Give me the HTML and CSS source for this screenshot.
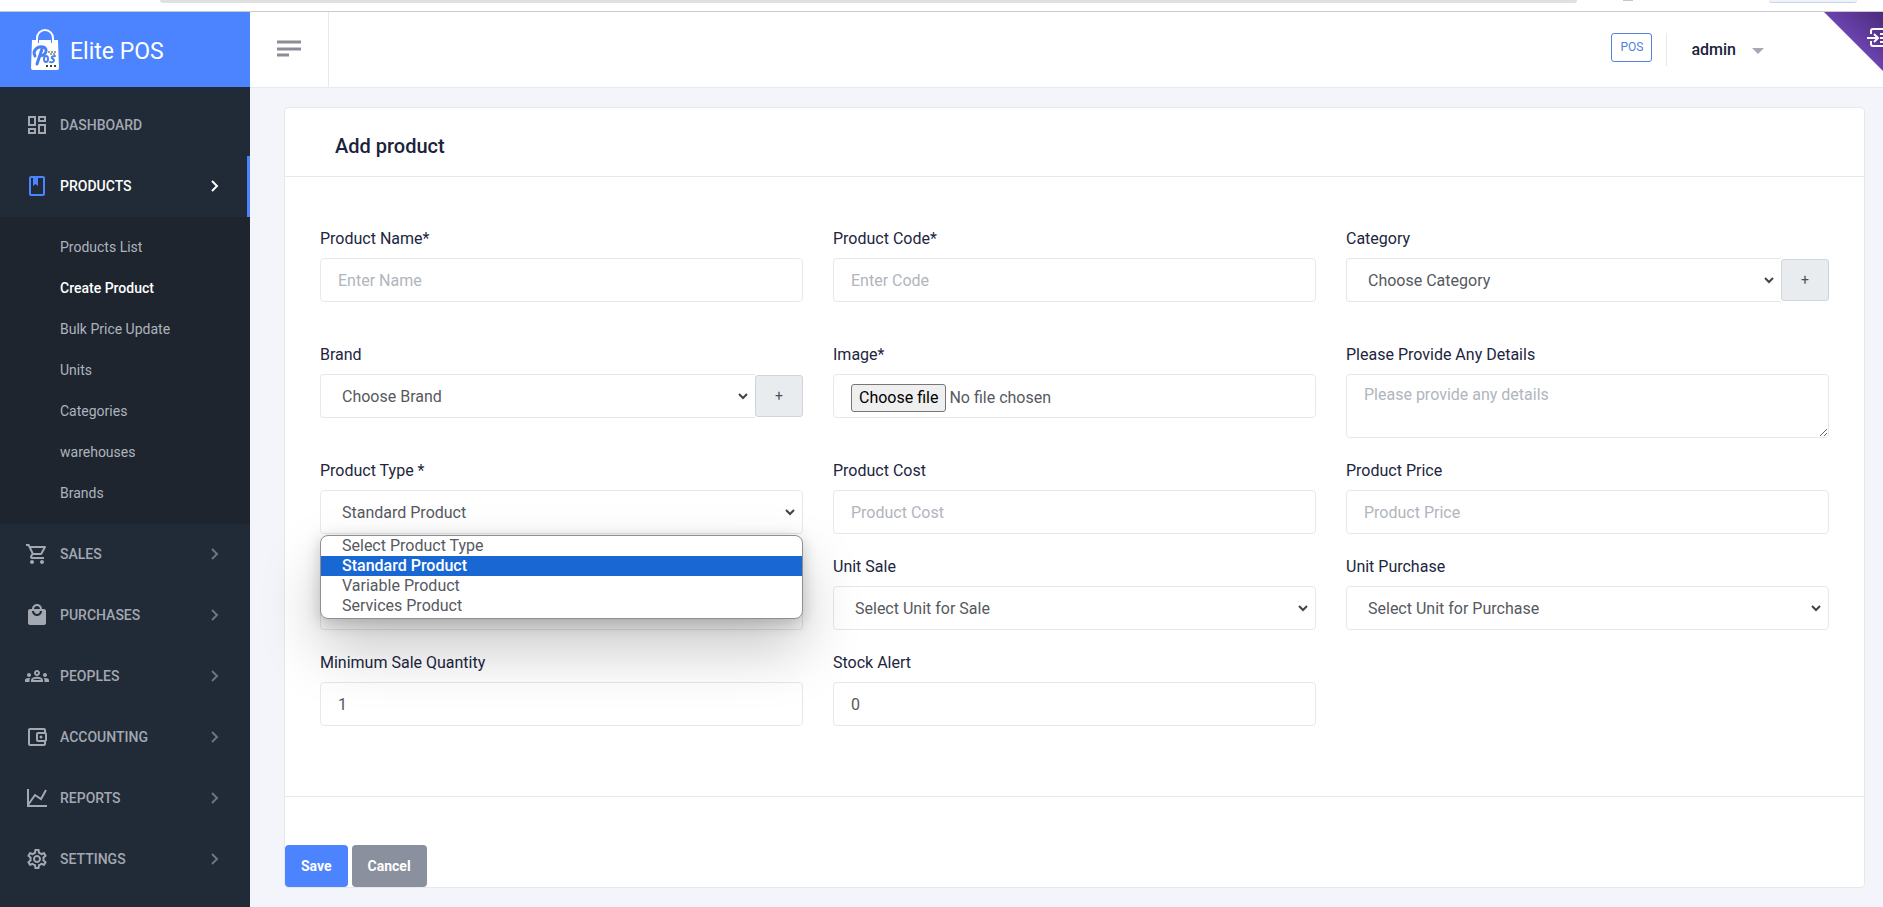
FILE: index.html
```html
<!DOCTYPE html>
<html lang="en">
<head>
    <meta charset="UTF-8">
    <meta name="viewport" content="width=device-width, initial-scale=1.0">
    <title>Add product - Elite POS</title>
    <link rel="stylesheet" href="styles.css">
</head>
<body>
    <div class="top-strip">
        <span class="strip-address"></span>
        <span class="strip-dot"></span>
        <span class="strip-pill"></span>
    </div>

    <div class="wrapper">
        <aside class="sidebar">
            <a href="#" class="brand">
                <svg class="brand-logo" width="30" height="42" viewBox="0 0 30 42">
                    <path d="M7 14V9a8 8 0 0 1 16 0v5" fill="none" stroke="#fff" stroke-width="2"/>
                    <path d="M2 11h4v3h3v-3h12v3h3v-3h4l1 28q0 2-2 2H3q-2 0-2-2z" fill="#fff"/>
                    <path d="M5 27C2 21 8 17 13 18c5 1 4 8-3 9M12 20L7 35" fill="none" stroke="#4a80f5" stroke-width="3" stroke-linecap="round"/>
                    <ellipse cx="16" cy="30" rx="2" ry="3" fill="none" stroke="#4a80f5" stroke-width="2"/>
                    <path d="M25 27c-4 0-4 2-2 3s1 4-3 3" fill="none" stroke="#4a80f5" stroke-width="2" stroke-linecap="round"/>
                    <path d="M18 23h8M20 25h6" stroke="#39404d" stroke-dasharray="2 1"/>
                    <path d="M16 37h2M20 37h2M24 37h2" stroke="#39404d" stroke-width="2"/>
                </svg>
                <span class="brand-name">Elite POS</span>
            </a>

            <nav class="menu">
                <a href="#" class="menu-item">
                    <svg class="menu-icon" viewBox="0 0 24 24"><path d="M19 5v2h-4V5h4M9 5v6H5V5h4m10 8v6h-4v-6h4M9 17v2H5v-2h4M21 3h-8v6h8V3zM11 3H3v10h8V3zm10 8h-8v10h8V11zm-10 4H3v6h8v-6z"/></svg>
                    <span>DASHBOARD</span>
                </a>
                <a href="#" class="menu-item active">
                    <svg class="menu-icon" viewBox="0 0 24 24"><path d="M18 2H6c-1.100 0-2 .9-2 2v16c0 1.100.9 2 2 2h12c1.100 0 2-.9 2-2V4c0-1.100-.9-2-2-2zm0 18H6V4h2v8l2.500-2 2.500 2V4h5v16z"/></svg>
                    <span>PRODUCTS</span>
                    <svg class="menu-arrow" viewBox="0 0 8 12"><path d="M1 1l5 5-5 5"/></svg>
                </a>
                <div class="submenu">
                    <a href="#">Products List</a>
                    <a href="#" class="current">Create Product</a>
                    <a href="#">Bulk Price Update</a>
                    <a href="#">Units</a>
                    <a href="#">Categories</a>
                    <a href="#">warehouses</a>
                    <a href="#">Brands</a>
                </div>
                <a href="#" class="menu-item">
                    <svg class="menu-icon" viewBox="0 0 24 24"><path d="M15.550 13c.75 0 1.410-.41 1.750-1.030l3.580-6.490c.37-.66-.11-1.480-.87-1.480H5.210l-.94-2H1v2h2l3.600 7.590-1.350 2.440C4.520 15.370 5.480 17 7 17h12v-2H7l1.100-2h7.450zM6.160 6h12.150l-2.760 5H8.530L6.160 6zM7 18c-1.100 0-1.990.9-1.990 2S5.900 22 7 22s2-.9 2-2-.9-2-2-2zm10 0c-1.100 0-1.990.9-1.990 2s.89 2 1.990 2 2-.9 2-2-.9-2-2-2z"/></svg>
                    <span>SALES</span>
                    <svg class="menu-arrow" viewBox="0 0 8 12"><path d="M1 1l5 5-5 5"/></svg>
                </a>
                <a href="#" class="menu-item">
                    <svg class="menu-icon" viewBox="0 0 24 24"><path d="M19 6h-2c0-2.760-2.240-5-5-5S7 3.240 7 6H5c-1.100 0-1.990.9-1.990 2L3 20c0 1.100.9 2 2 2h14c1.100 0 2-.9 2-2V8c0-1.100-.9-2-2-2zm-7-3c1.660 0 3 1.340 3 3H9c0-1.660 1.340-3 3-3zm0 10c-2.760 0-5-2.240-5-5h2c0 1.660 1.340 3 3 3s3-1.340 3-3h2c0 2.760-2.240 5-5 5z"/></svg>
                    <span>PURCHASES</span>
                    <svg class="menu-arrow" viewBox="0 0 8 12"><path d="M1 1l5 5-5 5"/></svg>
                </a>
                <a href="#" class="menu-item">
                    <svg class="menu-icon" viewBox="0 0 24 24"><path d="M4 13c1.100 0 2-.9 2-2s-.9-2-2-2-2 .9-2 2 .9 2 2 2zm1.130 1.100C4.760 14.040 4.390 14 4 14c-.99 0-1.930.21-2.780.58C.48 14.900 0 15.620 0 16.430V18h4.500v-1.610c0-.83.23-1.610.63-2.290zM20 13c1.100 0 2-.9 2-2s-.9-2-2-2-2 .9-2 2 .9 2 2 2zm4 3.430c0-.81-.48-1.530-1.220-1.850-.85-.37-1.790-.58-2.780-.58-.39 0-.76.04-1.130.1.400.68.63 1.460.63 2.290V18H24v-1.570zm-7.760-2.780C15.070 13.130 13.630 12.750 12 12.750s-3.070.39-4.240.9C6.680 14.130 6 15.210 6 16.390V18h12v-1.610c0-1.180-.68-2.260-1.760-2.740zM8.070 16c.09-.23.13-.39.91-.69.970-.38 1.990-.56 3.020-.56s2.050.18 3.020.56c.77.3.81.46.91.69H8.070zM12 8c.55 0 1 .45 1 1s-.45 1-1 1-1-.45-1-1 .45-1 1-1m0-2c-1.660 0-3 1.340-3 3s1.340 3 3 3 3-1.340 3-3-1.340-3-3-3z"/></svg>
                    <span>PEOPLES</span>
                    <svg class="menu-arrow" viewBox="0 0 8 12"><path d="M1 1l5 5-5 5"/></svg>
                </a>
                <a href="#" class="menu-item">
                    <svg class="menu-icon" viewBox="0 0 24 24"><path d="M21 7.280V5c0-1.100-.9-2-2-2H5c-1.110 0-2 .9-2 2v14c0 1.100.89 2 2 2h14c1.100 0 2-.9 2-2v-2.280c.59-.35 1-.98 1-1.720V9c0-.74-.41-1.370-1-1.720zM20 9v6h-7V9h7zM5 19V5h14v2h-6c-1.100 0-2 .9-2 2v6c0 1.100.9 2 2 2h6v2H5z"/><circle cx="16" cy="12" r="1.500"/></svg>
                    <span>ACCOUNTING</span>
                    <svg class="menu-arrow" viewBox="0 0 8 12"><path d="M1 1l5 5-5 5"/></svg>
                </a>
                <a href="#" class="menu-item">
                    <svg class="menu-icon line" viewBox="0 0 24 24"><path d="M3 3v17h19M3 19l7-10 6 4 5-9"/></svg>
                    <span>REPORTS</span>
                    <svg class="menu-arrow" viewBox="0 0 8 12"><path d="M1 1l5 5-5 5"/></svg>
                </a>
                <a href="#" class="menu-item">
                    <svg class="menu-icon" viewBox="0 0 24 24"><path d="M19.430 12.980c.04-.32.07-.64.07-.98 0-.34-.03-.66-.07-.98l2.110-1.650c.19-.15.24-.42.12-.64l-2-3.460c-.12-.22-.39-.3-.61-.22l-2.490 1c-.52-.4-1.080-.73-1.690-.98l-.38-2.650C14.460 2.180 14.250 2 14 2h-4c-.25 0-.46.18-.49.42l-.38 2.650c-.61.25-1.170.59-1.690.98l-2.490-1c-.23-.09-.49 0-.61.22l-2 3.460c-.13.22-.07.49.12.64l2.110 1.650c-.04.32-.07.65-.07.98 0 .33.03.66.07.98l-2.110 1.650c-.19.15-.24.42-.12.64l2 3.460c.12.22.39.3.61.22l2.490-1c.52.4 1.080.73 1.690.98l.38 2.650c.03.24.24.42.49.42h4c.25 0 .46-.18.49-.42l.38-2.650c.61-.25 1.170-.59 1.690-.98l2.490 1c.23.09.49 0 .61-.22l2-3.460c.12-.22.07-.49-.12-.64l-2.110-1.650zm-1.980-1.710c.04.31.05.52.05.73 0 .21-.02.43-.05.73l-.14 1.130.89.7 1.080.84-.7 1.210-1.270-.51-1.040-.42-.9.68c-.43.32-.84.56-1.250.73l-1.060.43-.16 1.130-.2 1.350h-1.400l-.19-1.350-.16-1.130-1.060-.43c-.43-.18-.83-.41-1.230-.71l-.91-.7-1.060.43-1.270.51-.7-1.210 1.080-.84.89-.7-.14-1.130c-.03-.31-.05-.54-.05-.74s.02-.43.05-.73l.14-1.130-.89-.7-1.080-.84.7-1.210 1.270.51 1.040.42.9-.68c.43-.32.84-.56 1.250-.73l1.060-.43.16-1.130.2-1.350h1.390l.19 1.350.16 1.130 1.060.43c.43.18.83.41 1.230.71l.91.7 1.060-.43 1.270-.51.7 1.210-1.070.85-.89.7.14 1.130zM12 8c-2.210 0-4 1.790-4 4s1.790 4 4 4 4-1.790 4-4-1.790-4-4-4zm0 6c-1.100 0-2-.9-2-2s.9-2 2-2 2 .9 2 2-.9 2-2 2z"/></svg>
                    <span>SETTINGS</span>
                    <svg class="menu-arrow" viewBox="0 0 8 12"><path d="M1 1l5 5-5 5"/></svg>
                </a>
            </nav>
        </aside>

        <div class="page">
            <header class="topbar">
                <button type="button" class="menu-toggle" aria-label="Toggle menu">
                    <svg width="24" height="18" viewBox="0 0 24 18"><path d="M0 3h24M0 10h24M0 16h12" stroke="#8a8d97" stroke-width="3"/></svg>
                </button>
                <div class="topbar-right">
                    <a href="#" class="pos-link">POS</a>
                    <button type="button" class="user-menu">admin <span class="caret"></span></button>
                </div>
                <svg class="corner" width="59" height="59" viewBox="0 0 59 59">
                    <defs>
                        <linearGradient id="cornerFill" x1="0" y1="1" x2="1" y2="0">
                            <stop offset="0.400" stop-color="#7048ba"/>
                            <stop offset="1" stop-color="#4c2a7a"/>
                        </linearGradient>
                    </defs>
                    <path d="M0 0h59v59z" fill="url(#cornerFill)"/>
                    <path d="M47 22v-3q0-2 2-2h11M47 29v3q0 2 2 2h11M43 26h10M50 22l4 4-4 4M56 22h4M56 26h4M56 30h4" fill="none" stroke="#fff" stroke-width="2"/>
                </svg>
            </header>

            <main class="content">
                <form class="card">
                    <div class="card-header">
                        <h4>Add product</h4>
                    </div>

                    <div class="card-body">
                        <div class="field spaced">
                            <label for="name">Product Name*</label>
                            <input type="text" id="name" class="form-control" placeholder="Enter Name">
                        </div>
                        <div class="field spaced">
                            <label for="code">Product Code*</label>
                            <input type="text" id="code" class="form-control" placeholder="Enter Code">
                        </div>
                        <div class="field spaced">
                            <label for="category">Category</label>
                            <div class="input-group">
                                <select id="category" class="form-control"><option>Choose Category</option></select>
                                <button type="button" class="add-btn" aria-label="Add category">+</button>
                            </div>
                        </div>

                        <div class="field">
                            <label for="brand">Brand</label>
                            <div class="input-group">
                                <select id="brand" class="form-control"><option>Choose Brand</option></select>
                                <button type="button" class="add-btn" aria-label="Add brand">+</button>
                            </div>
                        </div>
                        <div class="field">
                            <label for="image">Image*</label>
                            <div class="form-control file-control">
                                <input type="file" id="image" class="file-input">
                                <label for="image" class="file-btn">Choose file</label>
                                <span>No file chosen</span>
                            </div>
                        </div>
                        <div class="field">
                            <label for="details">Please Provide Any Details</label>
                            <textarea id="details" class="form-control" placeholder="Please provide any details"></textarea>
                        </div>

                        <div class="field">
                            <label for="type">Product Type *</label>
                            <div class="select-open">
                                <select id="type" class="form-control">
                                    <option>Select Product Type</option>
                                    <option selected>Standard Product</option>
                                    <option>Variable Product</option>
                                    <option>Services Product</option>
                                </select>
                                <ul class="options" role="listbox" aria-label="Product Type">
                                    <li role="option">Select Product Type</li>
                                    <li role="option" class="selected" aria-selected="true">Standard Product</li>
                                    <li role="option">Variable Product</li>
                                    <li role="option">Services Product</li>
                                </ul>
                            </div>
                        </div>
                        <div class="field">
                            <label for="cost">Product Cost</label>
                            <input type="text" id="cost" class="form-control" placeholder="Product Cost">
                        </div>
                        <div class="field">
                            <label for="price">Product Price</label>
                            <input type="text" id="price" class="form-control" placeholder="Product Price">
                        </div>

                        <div class="field">
                            <select id="unit" class="form-control" aria-label="Product Unit"><option></option></select>
                        </div>
                        <div class="field">
                            <label for="unitSale">Unit Sale</label>
                            <select id="unitSale" class="form-control"><option>Select Unit for Sale</option></select>
                        </div>
                        <div class="field">
                            <label for="unitPurchase">Unit Purchase</label>
                            <select id="unitPurchase" class="form-control"><option>Select Unit for Purchase</option></select>
                        </div>

                        <div class="field">
                            <label for="minQty">Minimum Sale Quantity</label>
                            <input type="text" id="minQty" class="form-control" value="1">
                        </div>
                        <div class="field">
                            <label for="stockAlert">Stock Alert</label>
                            <input type="text" id="stockAlert" class="form-control" value="0">
                        </div>
                    </div>

                    <div class="card-footer">
                        <button type="submit" class="btn btn-primary">Save</button>
                        <button type="reset" class="btn btn-secondary">Cancel</button>
                    </div>
                </form>
            </main>
        </div>
    </div>
</body>
</html>
```

FILE: styles.css
```css
* {
    box-sizing: border-box;
}
body {
    margin: 0;
    min-height: 100vh;
    display: flex;
    flex-direction: column;
    font-family: Roboto, Arial, sans-serif;
    font-size: 16px;
    line-height: 24px;
    color: #212540;
    background-color: #f4f5fa;
}
a {
    text-decoration: none;
}
button, input, select, textarea {
    font-family: inherit;
}

/* strip above the app */
.top-strip {
    display: flex;
    height: 12px;
    padding: 0 26px 0 160px;
    background: #fff;
    border-bottom: 1px solid #c9cacd;
}
.strip-address {
    flex: 1;
    height: 3px;
    background: #dfe0e1;
    border-radius: 0 0 12px 12px;
}
.strip-dot {
    width: 10px;
    height: 1px;
    margin: 0 136px 0 46px;
    background: #c4c5c7;
}
.strip-pill {
    width: 88px;
    height: 3px;
    background: #edf2fb;
    border-bottom: 1px solid #cbd5e2;
    border-radius: 0 0 12px 12px;
}

.wrapper {
    display: flex;
    flex: 1;
}

/* sidebar */
.sidebar {
    width: 250px;
    flex-shrink: 0;
    background: #212a37;
}
.brand {
    display: flex;
    align-items: center;
    gap: 10px;
    height: 75px;
    padding: 0 30px;
    background: #4c84ff;
    color: #fff;
}
.brand-name {
    padding-top: 5px;
    font-size: 23px;
}
.menu {
    padding-top: 8px;
}
.menu-item {
    display: flex;
    align-items: center;
    height: 61px;
    padding: 0 31px 2px 25px;
    color: #a3a8b1;
    font-size: 14px;
    font-weight: 500;
}
.menu-icon {
    width: 24px;
    height: 24px;
    margin-right: 11px;
    fill: currentColor;
}
.menu-icon.line {
    fill: none;
    stroke: currentColor;
    stroke-width: 2;
}
.menu-arrow {
    width: 8px;
    height: 12px;
    margin-left: auto;
    fill: none;
    stroke: #6e7580;
    stroke-width: 2;
}
.menu-item.active {
    color: #fff;
    padding-right: 28px;
    border-right: 3px solid #4c84ff;
}
.menu-item.active .menu-icon {
    fill: #4c84ff;
}
.menu-item.active .menu-arrow {
    stroke: #fff;
}
.submenu {
    padding: 10px 0;
    background: #1e252f;
}
.submenu a {
    display: block;
    padding-left: 60px;
    line-height: 41px;
    font-size: 14px;
    color: #adb4bd;
}
.submenu a.current {
    color: #fff;
    font-weight: 500;
}

/* top bar */
.page {
    flex: 1;
    min-width: 0;
}
.topbar {
    position: relative;
    display: flex;
    justify-content: space-between;
    height: 76px;
    background: #fff;
    border-bottom: 1px solid #e5e9f2;
}
.menu-toggle {
    width: 79px;
    padding: 0;
    border: none;
    border-right: 1px solid #e5e9f2;
    background: none;
    cursor: pointer;
}
.topbar-right {
    display: flex;
    align-items: flex-start;
    padding: 21px 119px 0 0;
}
.pos-link {
    padding: 0 8px;
    font-size: 12px;
    line-height: 27px;
    color: #5480e0;
    border: 1px solid #5480e0;
    border-radius: 3px;
}
.user-menu {
    display: flex;
    align-items: center;
    height: 33px;
    margin-left: 14px;
    padding: 0 0 0 24px;
    border: none;
    border-left: 1px solid #e5e9f2;
    background: none;
    font-size: 16px;
    font-weight: 500;
    color: #1b223c;
    cursor: pointer;
}
.caret {
    margin: 2px 0 0 16px;
    border: 6px solid transparent;
    border-top-color: #a5a9b2;
    border-bottom: none;
}
.corner {
    position: absolute;
    top: 0;
    right: 0;
}

/* form card */
.content {
    padding: 19px 18px 10px 34px;
}
.card {
    background: #fff;
    border: 1px solid #e5e9ec;
    border-radius: 4px;
}
.card-header {
    padding: 26px 50px 18px;
    border-bottom: 1px solid #e5e9ec;
}
.card-header h4 {
    margin: 0;
    font-size: 20px;
    font-weight: 500;
    color: #1b223c;
}
.card-body {
    display: grid;
    grid-template-columns: repeat(3, minmax(0, 1fr));
    gap: 21px 30px;
    padding: 50px 35px 70px;
    border-bottom: 1px solid #e5e9ec;
}
.field {
    display: flex;
    flex-direction: column;
    justify-content: flex-end;
    gap: 7px;
}
.field.spaced {
    padding-bottom: 20px;
}
.field:has(.input-group, .file-control) {
    justify-content: flex-start;
}
.form-control {
    width: 100%;
    height: 44px;
    padding: 0 17px;
    font-size: 16px;
    color: #565961;
    background: #fff;
    border: 1px solid #e5e9ec;
    border-radius: 4px;
}
.form-control::placeholder {
    color: #b1b5bd;
}
select.form-control {
    display: block;
    appearance: none;
    padding-left: 21px;
    background: #fff url("data:image/svg+xml,%3Csvg xmlns='http://www.w3.org/2000/svg' width='10' height='7' viewBox='0 0 10 7'%3E%3Cpath d='M1 1l4 4 4-4' fill='none' stroke='%23444' stroke-width='2'/%3E%3C/svg%3E") no-repeat right 7px center;
}
textarea.form-control {
    height: 64px;
    padding-top: 8px;
    line-height: 24px;
    resize: vertical;
}
.input-group {
    display: flex;
    align-items: center;
}
.input-group .form-control {
    flex: 1;
    border-right: none;
    border-radius: 4px 0 0 4px;
}
.add-btn {
    width: 48px;
    height: 42px;
    padding: 0;
    font-size: 14px;
    color: #495057;
    background: #e9ecef;
    border: 1px solid #ced4da;
    border-radius: 3px;
}
.file-control {
    position: relative;
    display: flex;
    align-items: center;
    gap: 3px;
    padding-top: 3px;
}
.file-input {
    position: absolute;
    width: 1px;
    height: 1px;
    opacity: 0;
}
.file-btn {
    padding: 1px 7px;
    color: #000;
    background: #efefef;
    border: 1px solid #767676;
    border-radius: 3px;
}

/* opened product type list */
.select-open {
    position: relative;
}
.options {
    position: absolute;
    top: 100%;
    left: 0;
    right: 0;
    z-index: 1;
    margin: 1px 0 0;
    padding: 0 0 2px;
    list-style: none;
    overflow: hidden;
    font-size: 16px;
    line-height: 20px;
    color: #565961;
    background: #fff;
    border: 1px solid #8f8f8f;
    border-radius: 8px;
    box-shadow: 0 4px 16px rgba(0, 0, 0, 0.2), 0 30px 60px rgba(0, 0, 0, 0.22);
}
.options li {
    padding-left: 21px;
}
.options .selected {
    color: #fff;
    font-weight: 500;
    background: #1967d2;
}

/* buttons */
.card-footer {
    display: flex;
    gap: 4px;
    padding-top: 48px;
}
.btn {
    height: 42px;
    padding: 0 16px;
    font-size: 14px;
    font-weight: 700;
    color: #fff;
    border: none;
    border-radius: 4px;
    cursor: pointer;
}
.btn-primary {
    background: #4c84ff;
}
.btn-secondary {
    background: #8a909d;
}
```
